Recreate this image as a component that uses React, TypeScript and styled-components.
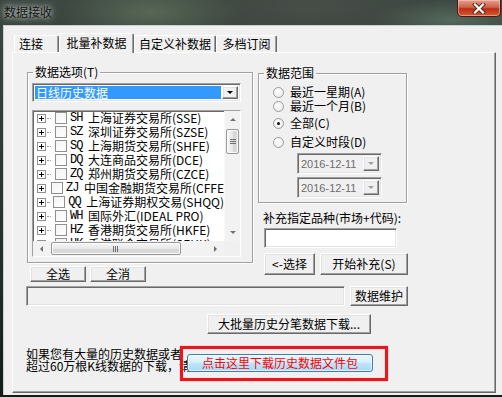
import styled, { createGlobalStyle } from 'styled-components';

const GlobalStyle = createGlobalStyle`
    html, body {
        margin: 0;
        padding: 0;
        background: #1f2924;
    }
    body {
        font-family: 'Noto Sans CJK SC', 'Liberation Sans', sans-serif;
        font-size: 12px;
        color: #000;
    }
`;

const Screen = styled.div`
    width: 502px;
    height: 397px;
    overflow: hidden;
    display: flex;
    flex-direction: column;
    background:
        radial-gradient(ellipse 90px 30px at 30% 12px, rgba(110, 130, 100, 0.55), transparent),
        radial-gradient(ellipse 120px 30px at 62% 8px, rgba(80, 80, 76, 0.6), transparent),
        radial-gradient(ellipse 80px 20px at 90% 20px, rgba(110, 140, 120, 0.5), transparent),
        linear-gradient(#3d4842, #222c27 70%, #141b18);
`;

const TitleBar = styled.div`
    height: 25px;
    flex: none;
    display: flex;
    align-items: flex-start;
    justify-content: space-between;
`;

const Title = styled.div`
    margin: 5px 0 0 4px;
    line-height: 14px;
    color: #141414;
    text-shadow: 0 0 5px rgba(235, 240, 235, 0.9), 0 0 10px rgba(235, 240, 235, 0.6);
`;

const CloseButton = styled.div`
    width: 44px;
    height: 17px;
    margin-right: 1px;
    box-sizing: border-box;
    border: 1px solid #4a1a10;
    border-top: none;
    border-radius: 0 0 5px 5px;
    background: linear-gradient(#e4a08e, #d0624a 45%, #bb2e12 55%, #d55a38);
    box-shadow: inset 0 0 0 1px rgba(255, 210, 200, 0.5);
    display: flex;
    align-items: center;
    justify-content: center;
`;

const Body = styled.div`
    flex: 1;
    display: flex;
`;

const Client = styled.div`
    margin-left: 3px;
    margin-bottom: 2px;
    flex: 1;
    background: #f0f0f0;
    border-top: 1px solid #c9d2d0;
    border-left: 1px solid #c9d2d0;
    padding: 7px 0 0 8px;
    display: flex;
    flex-direction: column;
`;

const TabRow = styled.div`
    height: 19px;
    margin-left: 2px;
    display: flex;
    align-items: flex-end;
`;

const Tab = styled.div<{ $w: number; $active?: boolean; $pl?: number }>`
    position: relative;
    z-index: ${(p) => (p.$active ? 1 : 0)};
    width: ${(p) => p.$w}px;
    height: ${(p) => (p.$active ? 20 : 17)}px;
    margin-bottom: ${(p) => (p.$active ? -1 : 0)}px;
    box-sizing: border-box;
    background: #f0f0f0;
    border: 1px solid;
    border-color: #fff #696969 transparent #fff;
    border-bottom: none;
    border-radius: 2px 2px 0 0;
    box-shadow: inset -1px 0 #a0a0a0;
    display: flex;
    align-items: center;
    justify-content: ${(p) => (p.$pl !== undefined ? 'flex-start' : 'center')};
    padding-left: ${(p) => p.$pl ?? 0}px;
    padding-bottom: ${(p) => (p.$active ? 2 : 0)}px;
    line-height: 14px;
    white-space: nowrap;
`;

const TabPanel = styled.div`
    width: 484px;
    height: 341px;
    box-sizing: border-box;
    border: 1px solid;
    border-color: #fff #696969 #696969 #fff;
    box-shadow: inset -1px -1px #a0a0a0;
    padding: 12px 0 0 14px;
    display: flex;
    flex-direction: column;
`;

const TopSection = styled.div`
    display: flex;
    gap: 5px;
    align-items: flex-start;
`;

const Column = styled.div<{ $w: number }>`
    width: ${(p) => p.$w}px;
    display: flex;
    flex-direction: column;
`;

const Group = styled.fieldset<{ $w: number; $mt?: number }>`
    width: ${(p) => p.$w}px;
    box-sizing: border-box;
    margin: ${(p) => p.$mt ?? 0}px 0 0 0;
    padding: 0;
    border: 1px solid #a0a0a0;
    box-shadow: inset 1px 1px 0 #fff, 1px 1px 0 #fff;
    min-width: 0;
`;

const Legend = styled.legend`
    margin-left: 5px;
    padding: 0 2px;
    line-height: 14px;
    font-size: 12px;
`;

const GroupInner = styled.div<{ $pad: string }>`
    padding: ${(p) => p.$pad};
    display: flex;
    flex-direction: column;
`;

const Sunken = styled.div`
    box-sizing: border-box;
    border: 1px solid;
    border-color: #a0a0a0 #fff #fff #a0a0a0;
    box-shadow: inset 1px 1px #696969, inset -1px -1px #e3e3e3;
`;

const Combo = styled(Sunken)<{ $w: number; $h: number; $disabled?: boolean }>`
    width: ${(p) => p.$w}px;
    height: ${(p) => p.$h}px;
    padding: 2px;
    display: flex;
    background: ${(p) => (p.$disabled ? '#f0f0f0' : '#fff')};
`;

const ComboField = styled.div<{ $selected?: boolean }>`
    flex: 1;
    display: flex;
    align-items: center;
    padding-left: 1px;
    margin-right: 1px;
    background: ${(p) => (p.$selected ? '#3399ff' : 'transparent')};
    color: ${(p) => (p.$selected ? '#fff' : '#6d6d6d')};
    line-height: 14px;
    white-space: nowrap;
    overflow: hidden;
`;

const DateText = styled.span`
    font-family: 'Liberation Sans', sans-serif;
    font-size: 11px;
`;

const Raised = styled.div`
    box-sizing: border-box;
    background: #f0f0f0;
    border: 1px solid;
    border-color: #fff #696969 #696969 #fff;
    box-shadow: inset -1px -1px #a0a0a0, inset 1px 1px #e3e3e3;
    display: flex;
    align-items: center;
    justify-content: center;
`;

const ArrowButton = styled(Raised)`
    width: 16px;
    flex: none;
`;

const Triangle = styled.div<{ $dir: 'up' | 'down' | 'left' | 'right'; $color: string; $size?: number }>`
    width: 0;
    height: 0;
    ${(p) => {
        const s = p.$size ?? 3;
        if (p.$dir === 'down')
            return `border-left:${s}px solid transparent;border-right:${s}px solid transparent;border-top:${s}px solid ${p.$color};`;
        if (p.$dir === 'up')
            return `border-left:${s}px solid transparent;border-right:${s}px solid transparent;border-bottom:${s}px solid ${p.$color};`;
        if (p.$dir === 'left')
            return `border-top:${s}px solid transparent;border-bottom:${s}px solid transparent;border-right:${s}px solid ${p.$color};`;
        return `border-top:${s}px solid transparent;border-bottom:${s}px solid transparent;border-left:${s}px solid ${p.$color};`;
    }}
`;

const ListBox = styled(Sunken)`
    margin-top: 8px;
    height: 147px;
    background: #fff;
    display: grid;
    grid-template-columns: 1fr 16px;
    grid-template-rows: 1fr 15px;
`;

const ListRows = styled.div`
    overflow: hidden;
    padding-left: 4px;
`;

const Row = styled.div`
    height: 14px;
    display: flex;
    align-items: center;
    white-space: nowrap;
    line-height: 14px;
`;

const DotLine = styled.div`
    width: 4px;
    margin: 0 4px 0 1px;
    border-top: 1px dotted #a0a0a0;
`;

const CheckBox = styled.div`
    width: 12px;
    height: 12px;
    flex: none;
    box-sizing: border-box;
    border: 1px solid #8e8f8f;
    background: linear-gradient(135deg, #f4f4f4, #fff);
    margin-right: 3px;
`;

const Code = styled.span`
    display: inline-block;
    flex: none;
    width: 18px;
    font-family: 'Liberation Mono', monospace;
    font-size: 12px;
    letter-spacing: -1px;
`;

const VScroll = styled.div`
    background: #f2f2f2;
    display: flex;
    flex-direction: column;
    border-left: 1px solid #f8f8f8;
`;

const HScroll = styled.div`
    background: #f2f2f2;
    display: flex;
`;

const ScrollArrow = styled.div<{ $horizontal?: boolean }>`
    flex: none;
    width: ${(p) => (p.$horizontal ? 17 : 16)}px;
    height: ${(p) => (p.$horizontal ? 15 : 17)}px;
    display: flex;
    align-items: center;
    justify-content: center;
`;

const ScrollTrack = styled.div`
    flex: 1;
    display: flex;
    padding: 1px 0 0 1px;
`;

const Thumb = styled.div<{ $horizontal?: boolean }>`
    box-sizing: border-box;
    width: ${(p) => (p.$horizontal ? 130 : 13)}px;
    height: ${(p) => (p.$horizontal ? 13 : 25)}px;
    border: 1px solid #989898;
    border-radius: 2px;
    background: ${(p) =>
        p.$horizontal
            ? 'linear-gradient(#f6f6f6, #e8e8e8 50%, #d6d6d6 51%, #dcdcdc)'
            : 'linear-gradient(90deg, #f6f6f6, #e8e8e8 50%, #d6d6d6 51%, #dcdcdc)'};
    box-shadow: inset 0 0 0 1px rgba(255, 255, 255, 0.8);
    display: flex;
    align-items: center;
    justify-content: center;
`;

const Grip = styled.div<{ $horizontal?: boolean }>`
    width: 6px;
    height: 6px;
    background: ${(p) =>
        p.$horizontal
            ? 'repeating-linear-gradient(90deg, #6f6f6f 0 1px, transparent 1px 2px)'
            : 'repeating-linear-gradient(#6f6f6f 0 1px, transparent 1px 2px)'};
`;

const Corner = styled.div`
    background: #f0f0f0;
`;

const ButtonRow = styled.div<{ $mt: number; $ml: number; $gap: number }>`
    display: flex;
    gap: ${(p) => p.$gap}px;
    margin-top: ${(p) => p.$mt}px;
    margin-left: ${(p) => p.$ml}px;
`;

const Button = styled(Raised)<{ $w: number; $h: number }>`
    width: ${(p) => p.$w}px;
    height: ${(p) => p.$h}px;
    line-height: 14px;
    white-space: nowrap;
`;

const RadioRow = styled.div<{ $mt?: number }>`
    height: 14px;
    margin-top: ${(p) => p.$mt ?? 0}px;
    display: flex;
    align-items: center;
    line-height: 14px;
    white-space: nowrap;
`;

const Radio = styled.div<{ $checked?: boolean }>`
    width: 11px;
    height: 11px;
    box-sizing: border-box;
    border-radius: 50%;
    border: 1px solid #9a9a9a;
    background: radial-gradient(circle at 35% 35%, #fff, #e8e8e8);
    margin-right: 6px;
    display: flex;
    align-items: center;
    justify-content: center;
    &::after {
        content: '';
        width: 3px;
        height: 3px;
        border-radius: 50%;
        background: ${(p) => (p.$checked ? '#111' : 'transparent')};
    }
`;

const DateCombo = styled(Combo)<{ $mt: number }>`
    margin-top: ${(p) => p.$mt}px;
    margin-left: 24px;
`;

const DisabledArrow = styled(ArrowButton)`
    background: #f0f0f0;
`;

const FieldLabel = styled.div`
    margin: 8px 0 0 5px;
    line-height: 14px;
    white-space: nowrap;
`;

const TextInput = styled(Sunken)`
    width: 133px;
    height: 20px;
    margin: 3px 0 0 6px;
    background: #fff;
`;

const StatusRow = styled.div`
    display: flex;
    gap: 5px;
    margin: 4px 0 0 -1px;
`;

const StatusBox = styled(Sunken)`
    width: 319px;
    height: 20px;
    background: #f0f0f0;
`;

const Footer = styled.div`
    position: relative;
    margin: 14px 0 0 -1px;
    line-height: 12px;
    white-space: nowrap;
`;

const RedFrame = styled.div`
    position: absolute;
    left: 154px;
    top: -2px;
    width: 208px;
    height: 35px;
    box-sizing: border-box;
    border: 3px solid #e8161d;
    box-shadow: inset 0 0 1px #ff8a8a, 0 0 1px #ff6a6a;
    padding: 5px 0 0 4px;
`;

const DownloadButton = styled.div`
    width: 186px;
    height: 18px;
    box-sizing: border-box;
    border: 1px solid #3c7fb1;
    border-radius: 3px;
    background: linear-gradient(#eaf6fd, #d9f0fc 45%, #bee6fd 50%, #a7d9f5);
    box-shadow: inset 0 0 0 1px rgba(255, 255, 255, 0.6);
    color: #ff0000;
    display: flex;
    align-items: center;
    justify-content: center;
    line-height: 14px;
`;

const MARKETS = [
    ['SH', '上海证券交易所(SSE)'],
    ['SZ', '深圳证券交易所(SZSE)'],
    ['SQ', '上海期货交易所(SHFE)'],
    ['DQ', '大连商品交易所(DCE)'],
    ['ZQ', '郑州期货交易所(CZCE)'],
    ['ZJ', '中国金融期货交易所(CFFEX)'],
    ['QQ', '上海证券期权交易(SHQQ)'],
    ['WH', '国际外汇(IDEAL PRO)'],
    ['HZ', '香港期货交易所(HKFE)'],
    ['HK', '香港联合交易所(SEHK)'],
];

function Expander() {
    return (
        <svg width="9" height="9" viewBox="0 0 9 9" style={{ flex: 'none' }}>
            <rect x="0.5" y="0.5" width="8" height="8" fill="#fff" stroke="#919191" />
            <path d="M2 4.5h5M4.5 2v5" stroke="#000" strokeWidth="1" />
        </svg>
    );
}

export default function App() {
    return (
        <Screen>
            <GlobalStyle />
            <TitleBar>
                <Title>数据接收</Title>
                <CloseButton>
                    <svg width="14" height="11" viewBox="0 0 14 11">
                        <path d="M3 1.5l8 8M11 1.5l-8 8" stroke="#5a2214" strokeWidth="4" strokeLinecap="square" />
                        <path d="M3 1.5l8 8M11 1.5l-8 8" stroke="#fff" strokeWidth="2.2" strokeLinecap="square" />
                    </svg>
                </CloseButton>
            </TitleBar>
            <Body>
                <Client>
                    <TabRow>
                        <Tab $w={45} $pl={4}>连接</Tab>
                        <Tab $w={75} $active>批量补数据</Tab>
                        <Tab $w={82}>自定义补数据</Tab>
                        <Tab $w={61}>多档订阅</Tab>
                    </TabRow>
                    <TabPanel>
                        <TopSection>
                            <Column $w={226}>
                                <Group $w={226}>
                                    <Legend>数据选项(T)</Legend>
                                    <GroupInner $pad="4px 11px 5px 4px">
                                        <Combo $w={209} $h={19}>
                                            <ComboField $selected>日线历史数据</ComboField>
                                            <ArrowButton>
                                                <Triangle $dir="down" $color="#000" />
                                            </ArrowButton>
                                        </Combo>
                                        <ListBox>
                                            <ListRows>
                                                {MARKETS.map(([code, name]) => (
                                                    <Row key={code}>
                                                        <Expander />
                                                        <DotLine />
                                                        <CheckBox />
                                                        <Code>{code}</Code>
                                                        <span>{name}</span>
                                                    </Row>
                                                ))}
                                            </ListRows>
                                            <VScroll>
                                                <ScrollArrow>
                                                    <Triangle $dir="up" $color="#707070" />
                                                </ScrollArrow>
                                                <ScrollTrack>
                                                    <Thumb>
                                                        <Grip />
                                                    </Thumb>
                                                </ScrollTrack>
                                                <ScrollArrow>
                                                    <Triangle $dir="down" $color="#707070" />
                                                </ScrollArrow>
                                            </VScroll>
                                            <HScroll>
                                                <ScrollArrow $horizontal>
                                                    <Triangle $dir="left" $color="#707070" />
                                                </ScrollArrow>
                                                <ScrollTrack>
                                                    <Thumb $horizontal>
                                                        <Grip $horizontal />
                                                    </Thumb>
                                                </ScrollTrack>
                                                <ScrollArrow $horizontal>
                                                    <Triangle $dir="right" $color="#707070" />
                                                </ScrollArrow>
                                            </HScroll>
                                            <Corner />
                                        </ListBox>
                                    </GroupInner>
                                </Group>
                                <ButtonRow $mt={3} $ml={3} $gap={4}>
                                    <Button $w={56} $h={16}>全选</Button>
                                    <Button $w={56} $h={16}>全消</Button>
                                </ButtonRow>
                            </Column>
                            <Column $w={150}>
                                <Group $w={149} $mt={1}>
                                    <Legend>数据范围</Legend>
                                    <GroupInner $pad="5px 0 4px 14px">
                                        <RadioRow>
                                            <Radio />
                                            最近一星期(A)
                                        </RadioRow>
                                        <RadioRow>
                                            <Radio />
                                            最近一个月(B)
                                        </RadioRow>
                                        <RadioRow $mt={3}>
                                            <Radio $checked />
                                            全部(C)
                                        </RadioRow>
                                        <RadioRow $mt={5}>
                                            <Radio />
                                            自定义时段(D)
                                        </RadioRow>
                                        <DateCombo $w={85} $h={21} $mt={4} $disabled>
                                            <ComboField>
                                                <DateText>2016-12-11</DateText>
                                            </ComboField>
                                            <DisabledArrow>
                                                <Triangle $dir="down" $color="#a0a0a0" />
                                            </DisabledArrow>
                                        </DateCombo>
                                        <DateCombo $w={85} $h={21} $mt={3} $disabled>
                                            <ComboField>
                                                <DateText>2016-12-11</DateText>
                                            </ComboField>
                                            <DisabledArrow>
                                                <Triangle $dir="down" $color="#a0a0a0" />
                                            </DisabledArrow>
                                        </DateCombo>
                                    </GroupInner>
                                </Group>
                                <FieldLabel>补充指定品种(市场+代码):</FieldLabel>
                                <TextInput />
                                <ButtonRow $mt={5} $ml={6} $gap={5}>
                                    <Button $w={51} $h={22}>&lt;-选择</Button>
                                    <Button $w={88} $h={22}>开始补充(S)</Button>
                                </ButtonRow>
                            </Column>
                        </TopSection>
                        <StatusRow>
                            <StatusBox />
                            <Button $w={58} $h={20}>数据维护</Button>
                        </StatusRow>
                        <ButtonRow $mt={8} $ml={180} $gap={0}>
                            <Button $w={164} $h={20}>大批量历史分笔数据下载...</Button>
                        </ButtonRow>
                        <Footer>
                            如果您有大量的历史数据或者
                            <br />
                            超过60万根K线数据的下载，请
                            <RedFrame>
                                <DownloadButton>点击这里下载历史数据文件包</DownloadButton>
                            </RedFrame>
                        </Footer>
                    </TabPanel>
                </Client>
            </Body>
        </Screen>
    );
}
